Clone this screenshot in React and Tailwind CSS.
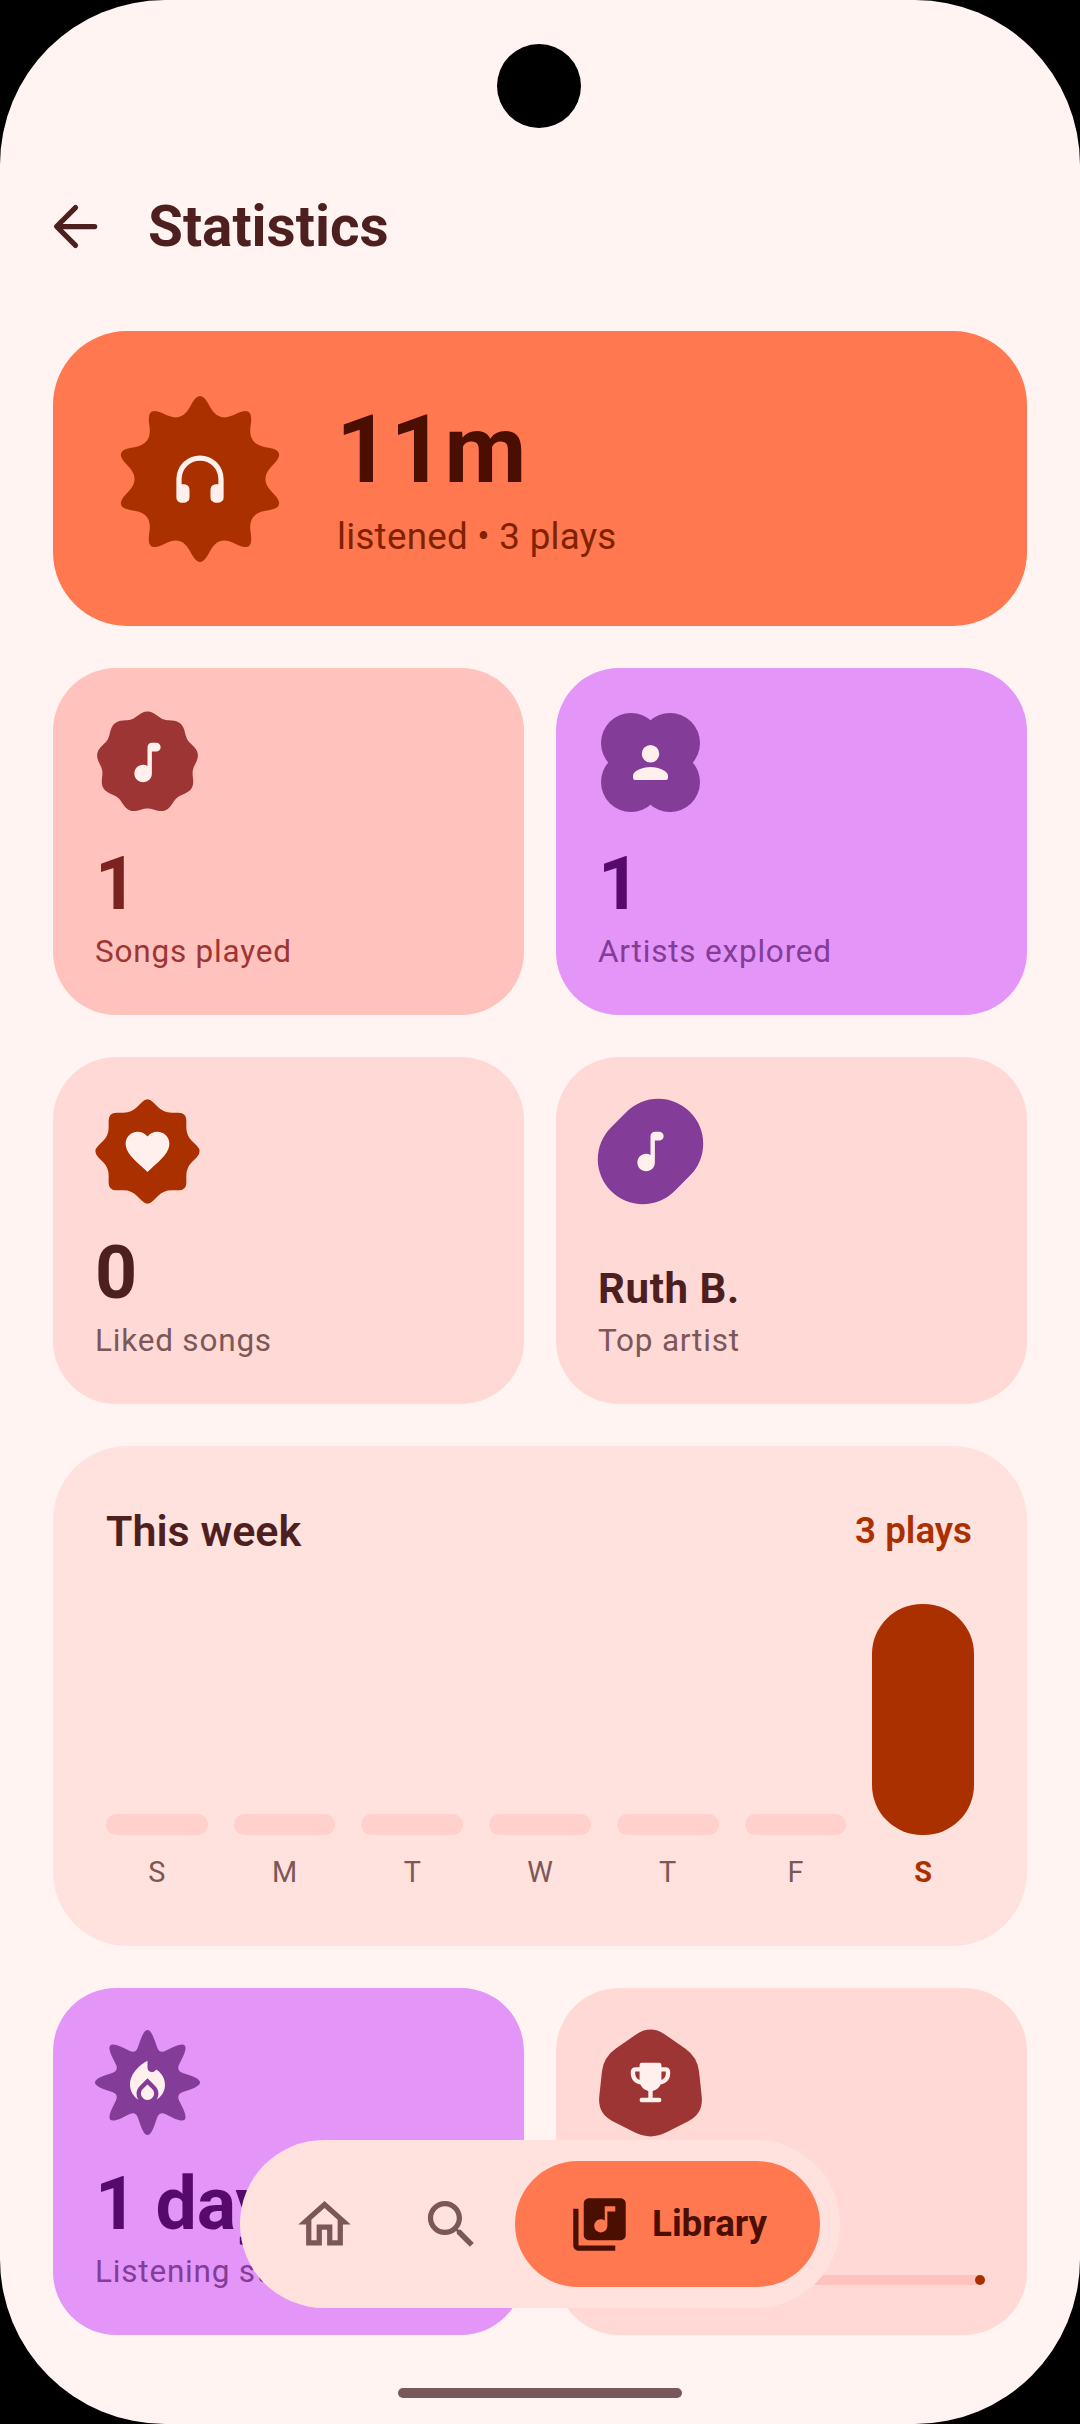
const f = (n) => n.toFixed(2);

function roundedPoly(pts, ds) {
  const L = pts.length;
  let d = "";
  pts.forEach((v, i) => {
    const prev = pts[(i - 1 + L) % L];
    const next = pts[(i + 1) % L];
    const r = ds[i % ds.length];
    const toward = (a, b) => {
      const dx = b[0] - a[0];
      const dy = b[1] - a[1];
      const len = Math.hypot(dx, dy);
      return [a[0] + (dx / len) * r, a[1] + (dy / len) * r];
    };
    const p1 = toward(v, prev);
    const p2 = toward(v, next);
    d += `${i === 0 ? "M" : "L"}${f(p1[0])} ${f(p1[1])}Q${f(v[0])} ${f(v[1])} ${f(p2[0])} ${f(p2[1])}`;
  });
  return d + "Z";
}

function star(n, R, r, dOuter, dInner) {
  const pts = [];
  for (let i = 0; i < n * 2; i++) {
    const a = -Math.PI / 2 + (i * Math.PI) / n;
    const rad = i % 2 === 0 ? R : r;
    pts.push([rad * Math.cos(a), rad * Math.sin(a)]);
  }
  return roundedPoly(pts, [dOuter, dInner]);
}

function cookie(n, mean, amp) {
  let d = "";
  for (let i = 0; i < 360; i++) {
    const t = (i / 360) * Math.PI * 2;
    const rad = mean + amp * Math.cos(n * t);
    const a = t - Math.PI / 2;
    d += `${i === 0 ? "M" : "L"}${f(rad * Math.cos(a))} ${f(rad * Math.sin(a))}`;
  }
  return d + "Z";
}

const NOTE = "M10 21c-2.21 0-4-1.79-4-4s1.79-4 4-4c.73 0 1.41.21 2 .55V5a2 2 0 0 1 2-2h2a2 2 0 0 1 0 4h-2v10c0 2.21-1.79 4-4 4z";
const PERSON = "M12 4a4 4 0 1 1 0 8 4 4 0 0 1 0-8zM12 14c-2.67 0-8 1.34-8 4v1a1 1 0 0 0 1 1h14a1 1 0 0 0 1-1v-1c0-2.66-5.33-4-8-4z";
const HEART = "M12 21.35l-1.45-1.32C5.4 15.36 2 12.28 2 8.5 2 5.42 4.42 3 7.5 3c1.74 0 3.41.81 4.5 2.09C13.09 3.81 14.76 3 16.5 3 19.58 3 22 5.42 22 8.5c0 3.78-3.4 6.86-8.55 11.54L12 21.35z";
const FLAME = "M12 12.9l-2.13 2.09C9.31 15.55 9 16.28 9 17.06 9 18.68 10.35 20 12 20s3-1.32 3-2.94c0-.78-.31-1.52-.87-2.07L12 12.9zM16 6l-.44.55C14.38 8.02 12 7.19 12 5.3V2S4 6 4 13c0 2.92 1.56 5.47 3.89 6.86-.56-.79-.89-1.76-.89-2.8 0-1.32.52-2.56 1.47-3.5L12 10.1l3.53 3.47c.95.93 1.47 2.17 1.47 3.5 0 1.02-.31 1.96-.85 2.75 1.89-1.15 3.29-3.06 3.71-5.3.66-3.51-1.1-6.79-3.86-8.52z";
const TROPHY = "M19 5h-2V4a1 1 0 0 0-1-1H8a1 1 0 0 0-1 1v1H5c-1.1 0-2 .9-2 2v1c0 2.55 1.92 4.63 4.39 4.94.63 1.5 1.98 2.63 3.61 2.96V19H8a1 1 0 0 0 0 2h8a1 1 0 0 0 0-2h-3v-3.1c1.63-.33 2.98-1.46 3.61-2.96C19.08 12.63 21 10.55 21 8V7c0-1.1-.9-2-2-2zM5 8V7h2v3.82C5.84 10.4 5 9.3 5 8zm14 0c0 1.3-.84 2.4-2 2.82V7h2v1z";
const HEADPHONES = "M12 3a9 9 0 0 0-9 9v7c0 1.1.9 2 2 2h1a2 2 0 0 0 2-2v-3a2 2 0 0 0-2-2H5v-2a7 7 0 0 1 14 0v2h-1a2 2 0 0 0-2 2v3a2 2 0 0 0 2 2h1a2 2 0 0 0 2-2v-7a9 9 0 0 0-9-9z";
const HOME = "M12 5.69l5 4.5V18h-2v-6H9v6H7v-7.81l5-4.5M12 3L2 12h3v8h6v-6h2v6h6v-8h3L12 3z";
const SEARCH = "M15.5 14h-.79l-.28-.27C15.41 12.59 16 11.11 16 9.5 16 5.91 13.09 3 9.5 3S3 5.91 3 9.5 5.91 16 9.5 16c1.61 0 3.09-.59 4.23-1.57l.27.28v.79l5 4.99L20.49 19l-4.99-5zm-6 0C7.01 14 5 11.99 5 9.5S7.01 5 9.5 5 14 7.01 14 9.5 11.99 14 9.5 14z";
const LIBRARY = "M20 2H8c-1.1 0-2 .9-2 2v12c0 1.1.9 2 2 2h12c1.1 0 2-.9 2-2V4c0-1.1-.9-2-2-2zm-2 5h-3v5.5c0 1.38-1.12 2.5-2.5 2.5S10 13.88 10 12.5s1.12-2.5 2.5-2.5c.57 0 1.08.19 1.5.51V5h4v2zM4 6H2v14c0 1.1.9 2 2 2h14v-2H4V6z";

const HEX = roundedPoly(
  [[0, -58], [47, -25.6], [53, 31], [0, 58], [-53, 31], [-47, -25.6]],
  [18, 15, 17, 18, 17, 15]
);

function Badge({ children, icon, color }) {
  return (
    <svg width="105" height="105" viewBox="-52.5 -52.5 105 105" className="block shrink-0 overflow-visible">
      <g fill={color} stroke={color}>{children}</g>
      <path d={icon} fill="#FFF0EE" transform="translate(-26.25 -26.25) scale(2.1875)" />
    </svg>
  );
}

function Clover() {
  return (
    <g stroke="none">
      <circle cx="-19.5" cy="-19.5" r="30" />
      <circle cx="19.5" cy="-19.5" r="30" />
      <circle cx="-19.5" cy="19.5" r="30" />
      <circle cx="19.5" cy="19.5" r="30" />
      <rect x="-30" y="-30" width="60" height="60" />
    </g>
  );
}

function StatCard({ bg, badge, value, valueClass, label, labelClass, name }) {
  return (
    <div className={`h-[347px] rounded-[63px] p-[42px] flex flex-col ${bg}`}>
      {badge}
      <div className="mt-auto">
        {name ? (
          <div className="text-[42px] leading-[50px] font-bold tracking-[0.6px] mb-[6px] text-[#4E1F1F]">{name}</div>
        ) : (
          <div className={`text-[73.5px] leading-[84px] font-bold mb-[5px] whitespace-nowrap ${valueClass}`}>{value}</div>
        )}
        <div className={`text-[31.5px] leading-[42px] tracking-[0.8px] whitespace-nowrap ${labelClass}`}>{label}</div>
      </div>
    </div>
  );
}

const days = ["S", "M", "T", "W", "T", "F", "S"];

export default function App() {
  return (
    <div className="h-[2424px] bg-black overflow-hidden font-[Roboto,sans-serif]">
      <div className="relative h-full rounded-[165px] overflow-hidden bg-[#FFF4F2]">
        <div className="absolute left-[497px] top-[44px] w-[84px] h-[84px] rounded-full bg-black" />

        <header className="h-[331px] pl-[44px] pt-[195px] flex items-start gap-[41px]">
          <svg width="63" height="63" viewBox="0 0 24 24" fill="none" stroke="#4E1F1F" strokeWidth="2" strokeLinecap="round" strokeLinejoin="round" className="shrink-0">
            <path d="M19.3 12H5M12 4.8L4.8 12l7.2 7.2" />
          </svg>
          <h1 className="text-[56.7px] leading-[63px] font-bold text-[#4E1F1F]">Statistics</h1>
        </header>

        <main className="px-[53px] flex flex-col gap-[42px]">
          <section className="h-[295px] rounded-[74px] bg-[#FF7850] pl-[63px] flex items-center gap-[52px]">
            <svg width="168" height="168" viewBox="-84 -84 168 168" className="block shrink-0">
              <path d={star(10, 90, 60, 16, 16)} fill="#AB3000" />
              <path d={HEADPHONES} fill="#FFF0EE" transform="translate(-31.5 -31.5) scale(2.625)" />
            </svg>
            <div className="pt-[4px]">
              <div className="text-[94.5px] leading-[100px] font-bold text-[#4A0F00]">11m</div>
              <div className="text-[36.75px] leading-[50px] mt-[12px] ml-[1px] tracking-[0.26px] text-[#7F2200]">listened • 3 plays</div>
            </div>
          </section>

          <div className="grid grid-cols-2 gap-x-[32px] gap-y-[42px]">
            <StatCard
              bg="bg-[#FFC2BD]"
              badge={<Badge icon={NOTE} color="#9E3535"><path d={cookie(9, 48.5, 2.5)} stroke="none" /></Badge>}
              value="1"
              valueClass="text-[#7A2320]"
              label="Songs played"
              labelClass="text-[#9E3535]"
            />
            <StatCard
              bg="bg-[#E496F8]"
              badge={<Badge icon={PERSON} color="#833C97"><Clover /></Badge>}
              value="1"
              valueClass="text-[#560A6B]"
              label="Artists explored"
              labelClass="text-[#833C97]"
            />
            <StatCard
              bg="bg-[#FFD9D6]"
              badge={<Badge icon={HEART} color="#AB3000"><path d={star(8, 55, 42, 8, 8)} stroke="none" /></Badge>}
              value="0"
              valueClass="text-[#4E1F1F]"
              label="Liked songs"
              labelClass="text-[#7C5757]"
            />
            <StatCard
              bg="bg-[#FFD9D6]"
              badge={
                <Badge icon={NOTE} color="#833C97">
                  <path d="M-7.7 7.7L7.7 -7.7" strokeWidth="90" strokeLinecap="round" fill="none" />
                </Badge>
              }
              name="Ruth B."
              label="Top artist"
              labelClass="text-[#7C5757]"
            />
          </div>

          <section className="h-[500px] rounded-[74px] bg-[#FFE1DE] p-[53px]">
            <div className="flex items-center justify-between h-[64px]">
              <span className="text-[43px] font-semibold text-[#4E1F1F]">This week</span>
              <span className="text-[36.75px] font-semibold pr-[2px] text-[#AB3000]">3 plays</span>
            </div>
            <div className="grid grid-cols-7 gap-x-[26px] h-[272px] items-end">
              {days.map((d, i) => (
                <div key={i} className={i === 6 ? "h-[231px] rounded-[50px] bg-[#AB3000]" : "h-[21px] rounded-full bg-[#FFD0CC]"} />
              ))}
            </div>
            <div className="grid grid-cols-7 gap-x-[26px] mt-[17px]">
              {days.map((d, i) => (
                <div key={i} className={`text-center text-[28.875px] leading-[40px] ${i === 6 ? "font-bold text-[#AB3000]" : "text-[#7C5757]"}`}>{d}</div>
              ))}
            </div>
          </section>

          <div className="grid grid-cols-2 gap-x-[32px]">
            <StatCard
              bg="bg-[#E496F8]"
              badge={<Badge icon={FLAME} color="#833C97"><path d={star(8, 63, 31, 22, 7)} stroke="none" /></Badge>}
              value="1 day"
              valueClass="text-[#560A6B]"
              label="Listening streak"
              labelClass="text-[#833C97]"
            />
            <div className="h-[347px] rounded-[63px] bg-[#FFD9D6] p-[42px] flex flex-col">
              <Badge icon={TROPHY} color="#9E3535"><path d={HEX} stroke="none" /></Badge>
              <div className="mt-auto mb-[8px] h-[10.5px] rounded-full bg-[#FFC2BD] flex justify-end">
                <div className="w-[10.5px] h-[10.5px] rounded-full bg-[#AB3000]" />
              </div>
            </div>
          </div>
        </main>

        <nav className="absolute left-[240px] top-[2140px] w-[600px] h-[168px] rounded-full bg-[#FFE1DE] py-[21px] pl-[21px] pr-[20px] flex">
          <div className="w-[126.5px] h-[126px] flex items-center justify-center shrink-0">
            <svg width="63" height="63" viewBox="0 0 24 24" fill="#7C5757"><path d={HOME} /></svg>
          </div>
          <div className="w-[127.5px] h-[126px] flex items-center justify-center shrink-0">
            <svg width="63" height="63" viewBox="0 0 24 24" fill="#7C5757"><path d={SEARCH} /></svg>
          </div>
          <div className="h-[126px] flex-1 rounded-full bg-[#FF7850] pl-[53px] flex items-center gap-[21px]">
            <svg width="63" height="63" viewBox="0 0 24 24" fill="#4A0F00" className="shrink-0"><path d={LIBRARY} /></svg>
            <span className="text-[36.75px] font-bold text-[#4A0F00]">Library</span>
          </div>
        </nav>

        <div className="absolute left-[398px] top-[2388px] w-[284px] h-[10px] rounded-full bg-[#785858]" />
      </div>
    </div>
  );
}
